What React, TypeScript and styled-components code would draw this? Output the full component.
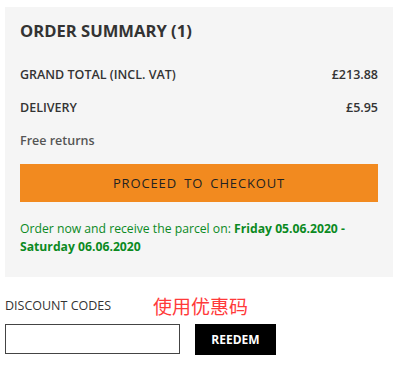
import React from "react";
import styled, { createGlobalStyle } from "styled-components";

const Global = createGlobalStyle`
  html, body { margin: 0; padding: 0; background: #fff; }
  body { font-family: "Open Sans", "Noto Sans", Arial, sans-serif; }
  * { box-sizing: border-box; }
`;

const Page = styled.div`
  padding: 7px 1px 0 5px;
`;

const Summary = styled.section`
  background: #f5f5f5;
  padding: 15px 15px 21px 15px;
`;

const Title = styled.h2`
  margin: 0 0 27px;
  font-size: 16.6px;
  font-weight: 700;
  color: #333;
  line-height: 18px;
`;

const Row = styled.div`
  display: flex;
  justify-content: space-between;
  align-items: center;
  font-size: 12.5px;
  font-weight: 600;
  color: #333;
  line-height: 16px;
  margin-bottom: 17px;
`;

const Note = styled.div`
  font-size: 12.5px;
  font-weight: 600;
  color: #555;
  line-height: 16px;
  margin-bottom: 15px;
`;

const Checkout = styled.button`
  display: block;
  width: 100%;
  height: 38px;
  border: 0;
  background: #f28a1f;
  color: #222;
  font-family: inherit;
  font-size: 13px;
  letter-spacing: 0.85px;
  word-spacing: 3px;
  cursor: pointer;
`;

const Delivery = styled.p`
  margin: 18px 0 0;
  font-size: 12.2px;
  line-height: 18px;
  color: #0b8a1f;
  strong { font-weight: 700; }
`;

const Discount = styled.section`
  padding-top: 18px;
`;

const LabelRow = styled.div`
  display: flex;
  align-items: center;
  height: 20px;
  margin-bottom: 9px;
`;

const Label = styled.span`
  font-size: 12.5px;
  color: #333;
  width: 148px;
`;

const Hint = styled.span`
  font-family: "Noto Sans CJK SC", sans-serif;
  font-size: 19px;
  color: #ff3a3a;
`;

const Form = styled.div`
  display: flex;
  gap: 15px;
`;

const Input = styled.input`
  width: 175px;
  height: 30px;
  border: 1px solid #444;
  background: #fff;
  padding: 0 6px;
`;

const Redeem = styled.button`
  width: 81px;
  height: 31px;
  border: 0;
  background: #000;
  color: #fff;
  font-family: inherit;
  font-weight: 700;
  font-size: 12px;
`;

export default function App() {
  return (
    <>
      <Global />
      <Page>
        <Summary>
          <Title>ORDER SUMMARY (1)</Title>
          <Row>
            <span>GRAND TOTAL (INCL. VAT)</span>
            <span>£213.88</span>
          </Row>
          <Row>
            <span>DELIVERY</span>
            <span>£5.95</span>
          </Row>
          <Note>Free returns</Note>
          <Checkout>PROCEED TO CHECKOUT</Checkout>
          <Delivery>
            Order now and receive the parcel on: <strong>Friday 05.06.2020 - Saturday 06.06.2020</strong>
          </Delivery>
        </Summary>
        <Discount>
          <LabelRow>
            <Label>DISCOUNT CODES</Label>
            <Hint>使用优惠码</Hint>
          </LabelRow>
          <Form>
            <Input type="text" />
            <Redeem>REEDEM</Redeem>
          </Form>
        </Discount>
      </Page>
    </>
  );
}
